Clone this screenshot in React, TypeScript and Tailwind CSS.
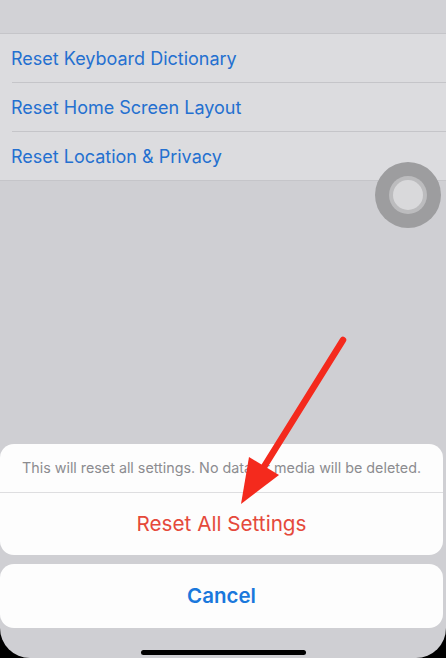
import React from 'react';

const rows = ['Reset Keyboard Dictionary', 'Reset Home Screen Layout', 'Reset Location & Privacy'];

function AssistiveTouch() {
  return (
    <div className="absolute left-[375px] top-[162px] w-[66px] h-[66px] rounded-full bg-[#9d9d9f] flex items-center justify-center">
      <div className="w-[38px] h-[38px] rounded-full bg-[#bcbcbe] flex items-center justify-center">
        <div className="w-[30px] h-[30px] rounded-full bg-[#d9d9db]" />
      </div>
    </div>
  );
}

function Arrow() {
  return (
    <svg className="absolute left-0 top-0 pointer-events-none" width="446" height="658" viewBox="0 0 446 658">
      <line x1="343" y1="340" x2="262" y2="470" stroke="#f42a1d" strokeWidth="6.5" strokeLinecap="round" />
      <polygon points="241,504 249,457 279,475" fill="#f42a1d" />
    </svg>
  );
}

export default function App() {
  return (
    <div className="relative w-[446px] h-[658px] bg-black overflow-hidden" style={{ fontFamily: 'Inter, "Liberation Sans", sans-serif' }}>
      <div className="h-full bg-[#cfcfd3] rounded-b-[30px] flex flex-col">
        <div className="h-[33px] bg-[#d2d2d6]" />
        <div className="bg-[#dcdcdf] border-y border-[#c5c5c9]">
          {rows.map((r, i) => (
            <div key={r} className="pl-[12px]">
              <div className={`flex items-center text-[18px] text-[#2470d0] ${i < rows.length - 1 ? 'h-[49px] border-b border-[#c5c5c9]' : 'h-[48px]'}`}>
                <span className="-ml-px">{r}</span>
              </div>
            </div>
          ))}
        </div>
        <div className="flex-1" />
        <div className="pr-[3px] flex flex-col gap-[9px]">
          <div className="bg-[#fdfdfd] rounded-[14px] overflow-hidden">
            <div className="h-[49px] flex items-center justify-center text-[14.3px] text-[#8c8c90] border-b border-[#dedee0]">
              This will reset all settings. No data or media will be deleted.
            </div>
            <div className="h-[62px] flex items-center justify-center text-[20.7px] text-[#e5493b]">
              Reset All Settings
            </div>
          </div>
          <div className="bg-[#fdfdfd] rounded-[14px] h-[64px] flex items-center justify-center text-[20.5px] font-semibold text-[#1a78dc]">
            Cancel
          </div>
        </div>
        <div className="h-[30px] flex items-end justify-center pb-[3px]">
          <div className="w-[165px] h-[5px] rounded-full bg-black" />
        </div>
      </div>
      <AssistiveTouch />
      <Arrow />
    </div>
  );
}
